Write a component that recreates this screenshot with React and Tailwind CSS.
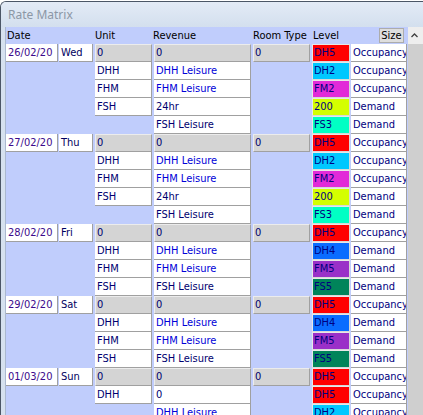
import React from "react";

const LV = {
  DH5: { t: "DH5", c: "bg-[#ff0000]" },
  DH2: { t: "DH2", c: "bg-[#00c8ff]" },
  FM2: { t: "FM2", c: "bg-[#e22ad8]" },
  Y200: { t: "200", c: "bg-[#d4ff00]" },
  FS3: { t: "FS3", c: "bg-[#00ffc4]" },
  DH4: { t: "DH4", c: "bg-[#0a6cff]" },
  FM5: { t: "FM5", c: "bg-[#9a30c8]" },
  FS5: { t: "FS5", c: "bg-[#00845a]" },
};

function groupA(date, day) {
  return [
    { date, day, unit: "0", unitGray: true, rev: "0", revGray: true, room: true, lv: LV.DH5, mode: "Occupancy" },
    { unit: "DHH", rev: "DHH Leisure", revBlue: true, lv: LV.DH2, mode: "Occupancy" },
    { unit: "FHM", rev: "FHM Leisure", revBlue: true, lv: LV.FM2, mode: "Occupancy" },
    { unit: "FSH", rev: "24hr", lv: LV.Y200, mode: "Demand" },
    { rev: "FSH Leisure", lv: LV.FS3, mode: "Demand" },
  ];
}

function groupB(date, day) {
  return [
    { date, day, unit: "0", unitGray: true, rev: "0", revGray: true, room: true, lv: LV.DH5, mode: "Occupancy" },
    { unit: "DHH", rev: "DHH Leisure", revBlue: true, lv: LV.DH4, mode: "Demand" },
    { unit: "FHM", rev: "FHM Leisure", revBlue: true, lv: LV.FM5, mode: "Demand" },
    { unit: "FSH", rev: "FSH Leisure", lv: LV.FS5, mode: "Demand" },
  ];
}

const rows = [
  ...groupA("26/02/20", "Wed"),
  ...groupA("27/02/20", "Thu"),
  ...groupB("28/02/20", "Fri"),
  ...groupB("29/02/20", "Sat"),
  { date: "01/03/20", day: "Sun", unit: "0", unitGray: true, rev: "0", revGray: true, room: true, lv: LV.DH5, mode: "Occupancy" },
  { unit: "DHH", rev: "0", lv: LV.DH5, mode: "Occupancy" },
  { rev: "DHH Leisure", revBlue: true, lv: LV.DH2, mode: "Occupancy" },
];

const whiteCell = "bg-white border-r border-b border-[#a0a0a0] pl-[2px] leading-[17px] whitespace-nowrap overflow-hidden";
const grayCell = "bg-[#d4d4d4] border-t border-l border-t-[#ececec] border-l-[#ececec] border-r border-b border-r-[#a0a0a0] border-b-[#a0a0a0] pl-[1px] leading-[16px] whitespace-nowrap overflow-hidden";

function Row({ r }) {
  return (
    <div className="flex h-[18px] shrink-0">
      {r.date ? (
        <div className={`w-[52px] ${whiteCell} text-[#3c0a8c]`}>{r.date}</div>
      ) : (
        <div className="w-[52px]" />
      )}
      {r.day ? (
        <div className={`ml-[1px] w-[34px] ${whiteCell} text-[#000060]`}>{r.day}</div>
      ) : (
        <div className="ml-[1px] w-[34px]" />
      )}
      {r.unit ? (
        <div className={`ml-[2px] w-[57px] ${r.unitGray ? grayCell : whiteCell} text-[#000070]`}>{r.unit}</div>
      ) : (
        <div className="ml-[2px] w-[57px]" />
      )}
      <div
        className={`ml-[2px] w-[97px] ${r.revGray ? grayCell : whiteCell} ${r.revBlue ? "text-[#0000d8]" : "text-[#000070]"}`}
      >
        {r.rev}
      </div>
      {r.room ? (
        <div className={`ml-[2px] w-[57px] ${grayCell} text-[#000070]`}>0</div>
      ) : (
        <div className="ml-[2px] w-[57px]" />
      )}
      <div
        className={`ml-[2px] w-[38px] ${r.lv.c} border-t border-l border-t-[#e8e8e8] border-l-[#e8e8e8] border-r border-b border-r-[#d8d8d8] border-b-[#d8d8d8] pl-[1px] leading-[16px] text-[#000080]`}
      >
        {r.lv.t}
      </div>
      <div className={`ml-[1px] w-[56px] ${whiteCell} text-[#000080]`}>{r.mode}</div>
    </div>
  );
}

export default function App() {
  return (
    <div className="w-[423px] h-[415px] overflow-hidden bg-white">
      <div className="mt-[1px] h-[414px] border-l border-t border-[#4b5666] rounded-tl-[6px] bg-[#d6e1ef] flex flex-col overflow-hidden">
        <div className="h-[25px] shrink-0 bg-gradient-to-b from-[#e3ebf6] to-[#d3dfee] pl-[7px] flex items-center font-['Noto_Sans',sans-serif] text-[12px] text-[#8c97a6]">
          Rate Matrix
        </div>
        <div className="flex-1 flex ml-[4px] border-l border-[#aab8cf] bg-[#c0cdfc] font-['DejaVu_Sans_Condensed','DejaVu_Sans',sans-serif] text-[11px] text-black">
          <div className="w-[402px] flex flex-col">
            <div className="relative flex h-[17px] shrink-0 leading-[17px]">
              <div className="w-[89px] pl-[1px]">Date</div>
              <div className="w-[58px]">Unit</div>
              <div className="w-[100px]">Revenue</div>
              <div className="w-[60px]">Room Type</div>
              <div className="w-[40px]">Level</div>
              <div className="absolute left-[373px] top-[1px] w-[25px] h-[15px] bg-[#dedede] border border-[#acacac] leading-[13px] text-center">
                Size
              </div>
            </div>
            {rows.map((r, i) => (
              <Row key={i} r={r} />
            ))}
          </div>
          <div className="flex-1 flex flex-col">
            <div className="h-[17px] bg-[#eeeeee] flex items-center justify-center pr-[3px]">
              <svg width="7" height="5" viewBox="0 0 7 5">
                <path d="M0.5 4 L3.5 1 L6.5 4" fill="none" stroke="#404040" strokeWidth="1.3" />
              </svg>
            </div>
            <div className="flex-1 bg-[#cfcfcf]" />
          </div>
        </div>
      </div>
    </div>
  );
}
